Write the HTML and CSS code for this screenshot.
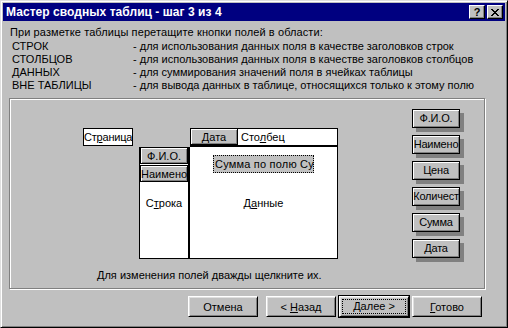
FILE: index.html
```html
<!DOCTYPE html>
<html lang="ru">
  <head>
    <meta charset="UTF-8" />
    <title>Мастер сводных таблиц</title>
    <link rel="stylesheet" href="styles.css">
  </head>
  <body>
    <div class="window">
      <div class="titlebar">
        <span class="title">Мастер сводных таблиц - шаг 3 из 4</span>
        <div class="caption-btns">
          <span class="cbtn help">?</span>
          <span class="cbtn close">
            <svg width="8" height="7" viewBox="0 0 8 7" shape-rendering="crispEdges">
              <path d="M0 0h2v1H0zM6 0h2v1H6zM1 1h2v1H1zM5 1h2v1H5zM2 2h4v1H2zM3 3h2v1H3zM2 4h4v1H2zM1 5h2v1H1zM5 5h2v1H5zM0 6h2v1H0zM6 6h2v1H6z" fill="#000"/>
            </svg>
          </span>
        </div>
      </div>

      <div class="intro">
        <p>При разметке таблицы перетащите кнопки полей в области:</p>
        <div class="areas">
          <span>СТРОК</span><span>- для использования данных поля в качестве заголовков строк</span>
          <span>СТОЛБЦОВ</span><span>- для использования данных поля в качестве заголовков столбцов</span>
          <span>ДАННЫХ</span><span>- для суммирования значений поля в ячейках таблицы</span>
          <span>ВНЕ ТАБЛИЦЫ</span><span>- для вывода данных в таблице, относящихся только к этому полю</span>
        </div>
      </div>

      <div class="group">
        <div class="layout">
          <div class="page-area">Ст<u>р</u>аница</div>

          <div class="pivot">
            <div class="corner"></div>
            <div class="col-area">
              <span class="field">Дата</span>
              <span class="col-label">Сто<u>л</u>бец</span>
            </div>
            <div class="row-area">
              <span class="field">Ф.И.О.</span>
              <span class="field">Наимено</span>
              <span class="area-label">С<u>т</u>рока</span>
            </div>
            <div class="data-area">
              <span class="field focused">Сумма по полю Су</span>
              <span class="area-label">Д<u>а</u>нные</span>
            </div>
          </div>

          <div class="field-list">
            <span class="field shadowed">Ф.И.О.</span>
            <span class="field shadowed">Наимено</span>
            <span class="field shadowed">Цена</span>
            <span class="field shadowed">Количест</span>
            <span class="field shadowed">Сумма</span>
            <span class="field shadowed">Дата</span>
          </div>
        </div>
        <p class="hint">Для изменения полей дважды щелкните их.</p>
      </div>

      <div class="footer">
        <button class="btn">Отмена</button>
        <button class="btn">&lt; <u>Н</u>азад</button>
        <button class="btn default"><span><u>Д</u>алее &gt;</span></button>
        <button class="btn"><u>Г</u>отово</button>
      </div>
    </div>
  </body>
</html>
```

FILE: styles.css
```css
* {
  margin: 0;
  padding: 0;
  box-sizing: border-box;
}
body {
  background: #c0c0c0;
  font-family: "Liberation Sans", Arial, sans-serif;
  font-size: 11px;
  color: #000;
}
u {
  text-decoration: underline;
  text-underline-offset: 1px;
}

.window {
  width: 508px;
  height: 328px;
  background: #c0c0c0;
  border: 1px solid;
  border-color: #dfdfdf #000 #000 #dfdfdf;
  box-shadow: inset 1px 1px 0 #fff, inset -1px -1px 0 #808080;
  padding: 2px;
}

/* title bar */
.titlebar {
  height: 18px;
  background: #000080;
  display: flex;
  align-items: center;
  justify-content: space-between;
  padding: 0 2px 0 3px;
}
.title {
  color: #fff;
  font-weight: bold;
  font-size: 12px;
  letter-spacing: 0.05px;
}
.caption-btns {
  display: flex;
  gap: 2px;
}
.cbtn {
  width: 16px;
  height: 14px;
  background: #c0c0c0;
  border: 1px solid;
  border-color: #fff #000 #000 #fff;
  box-shadow: inset -1px -1px 0 #808080;
  display: flex;
  align-items: center;
  justify-content: center;
  font-weight: bold;
  font-size: 11px;
  line-height: 1;
}

/* intro */
.intro {
  padding: 5px 0 0 7px;
  line-height: 13px;
}
.intro p {
  margin-bottom: 1px;
  letter-spacing: 0.1px;
}
.areas {
  display: grid;
  grid-template-columns: 121px auto;
  padding-left: 2px;
}

/* group box */
.group {
  margin: 6px 0 0 6px;
  width: 476px;
  height: 191px;
  border: 1px solid #808080;
  box-shadow: inset 1px 1px 0 #fff, 1px 1px 0 #fff;
}
.layout {
  display: flex;
  align-items: flex-start;
  padding-left: 73px;
}
.page-area {
  margin-top: 29px;
  width: 50px;
  height: 18px;
  background: #fff;
  border: 1px solid #000;
  line-height: 16px;
  white-space: nowrap;
  letter-spacing: -0.2px;
}

/* pivot diagram */
.pivot {
  margin: 29px 0 0 6px;
  display: grid;
  grid-template-columns: 51px 148px;
  grid-template-rows: 19px 112px;
}
.col-area {
  display: flex;
  border-bottom: 2px solid #000;
}
.col-area .field {
  width: 48px;
  height: 17px;
}
.col-label {
  flex: 1;
  background: #fff;
  border-top: 1px solid #000;
  border-right: 1px solid #000;
  padding-left: 3px;
  line-height: 16px;
}
.row-area {
  background: #fff;
  border-left: 1px solid #000;
  border-right: 2px solid #000;
  border-bottom: 1px solid #000;
  display: flex;
  flex-direction: column;
  align-items: center;
  gap: 1px;
}
.row-area .field {
  width: 48px;
  height: 17px;
}
.data-area {
  background: #fff;
  border-right: 1px solid #000;
  border-bottom: 1px solid #000;
  display: flex;
  flex-direction: column;
  align-items: flex-start;
  padding: 8px 0 0 23px;
}
.area-label {
  align-self: center;
}
.row-area .area-label {
  margin-top: 14px;
}
.data-area .area-label {
  margin-top: 24px;
  margin-left: -23px;
}

/* field buttons */
.field {
  display: block;
  height: 19px;
  background: #c0c0c0;
  border: 1px solid #000;
  box-shadow: inset 1px 1px 0 #fff, inset -1px -1px 0 #808080;
  text-align: center;
  line-height: 16px;
  white-space: nowrap;
}
.field.focused {
  width: 101px;
  height: 18px;
  border: 1px dotted #000;
  box-shadow: none;
  text-align: left;
  padding-left: 1px;
  letter-spacing: 0.2px;
}
.field-list {
  margin: 10px 0 0 74px;
  display: flex;
  flex-direction: column;
  gap: 7px;
}
.field.shadowed {
  width: 48px;
  letter-spacing: -0.2px;
  box-shadow: inset 1px 1px 0 #fff, inset -1px -1px 0 #808080, 4px 4px 0 #808080;
}

.hint {
  margin: 10px 0 0 87px;
  line-height: 13px;
}

/* bottom buttons */
.footer {
  display: flex;
  justify-content: flex-end;
  padding-right: 23px;
  margin-top: 7px;
}
.btn {
  width: 70px;
  height: 21px;
  margin-left: 3px;
  font: inherit;
  color: #000;
  background: #c0c0c0;
  border: 1px solid;
  border-color: #fff #000 #000 #fff;
  box-shadow: inset 1px 1px 0 #dfdfdf, inset -1px -1px 0 #808080;
}
.btn:first-child {
  margin-right: 5px;
}
.btn.default {
  outline: 1px solid #000;
  padding: 2px;
}
.btn.default span {
  display: block;
  height: 100%;
  border: 1px dotted #000;
  line-height: 13px;
}
```
